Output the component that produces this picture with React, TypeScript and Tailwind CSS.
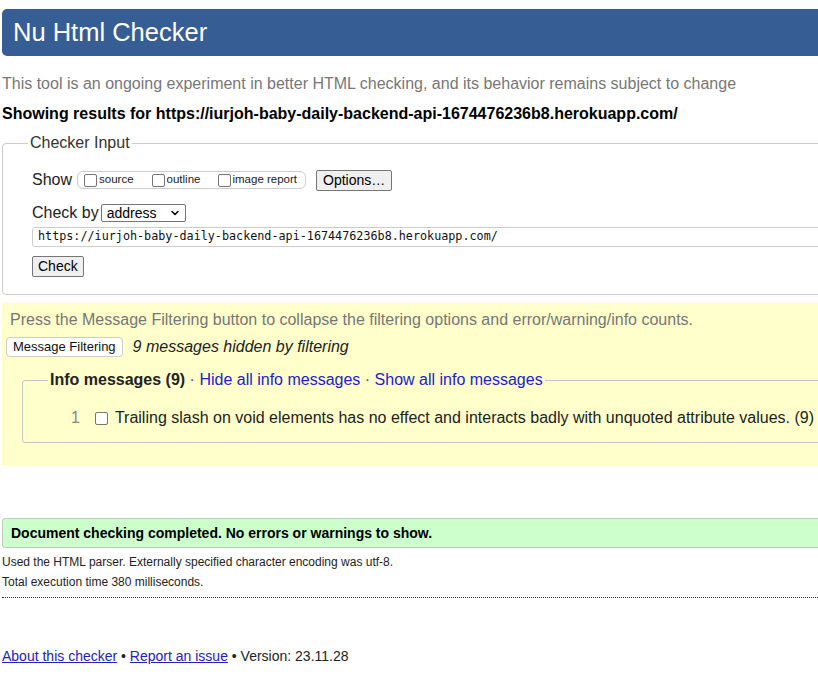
import { ChevronDown } from 'lucide-react';

function Box() {
  return <span className="inline-block w-[13px] h-[13px] border border-[#767676] rounded-[2px] bg-white shrink-0" />;
}

function Btn({ children, className = '' }: { children: React.ReactNode; className?: string }) {
  return (
    <span className={`inline-flex items-center border border-[#767676] rounded-[2px] bg-[#efefef] text-black ${className}`}>
      {children}
    </span>
  );
}

export default function App() {
  return (
    <div className="w-[818px] h-[677px] overflow-hidden bg-white font-['Liberation_Sans',Arial,sans-serif] text-black">
      <div className="w-[860px] pl-[2px]">
        {/* header */}
        <div className="mt-[9px] h-[47px] bg-[#375d95] rounded-l-[5px] flex items-center pl-[11px]">
          <h1 className="text-white text-[25.5px] leading-none">Nu Html Checker</h1>
        </div>

        <p className="mt-[19px] text-[16px] leading-[18px] text-[#777]">
          This tool is an ongoing experiment in better HTML checking, and its behavior remains subject to change
        </p>
        <p className="mt-[12px] text-[16px] leading-[18px] font-bold">
          Showing results for https://iurjoh-baby-daily-backend-api-1674476236b8.herokuapp.com/
        </p>

        {/* checker input */}
        <fieldset className="mt-[11px] border border-[#ccc] rounded-[4px] pb-[16px] pt-[16px]">
          <legend className="ml-[25px] px-[2px] text-[16px] leading-[18px] text-[#333]">Checker Input</legend>
          <div className="pl-[29px]">
            <div className="flex items-center h-[22px] mt-[1px]">
              <span className="text-[16px] text-[#222] mr-[5px]">Show</span>
              <span className="flex items-center h-[18px] border border-[#ccc] rounded-[6px] px-[6px] text-[11.5px] text-[#222]">
                <Box />
                <span className="ml-[2px] mr-[18px]">source</span>
                <Box />
                <span className="ml-[2px] mr-[18px]">outline</span>
                <Box />
                <span className="ml-[1px] mr-[2px]">image report</span>
              </span>
              <Btn className="ml-[10px] h-[21px] px-[6px] text-[14px]">Options…</Btn>
            </div>
            <div className="flex items-center h-[20px] mt-[12px]">
              <span className="text-[16px] text-[#222] mr-[2px]">Check by</span>
              <span className="flex items-center justify-between w-[85px] h-[18px] border border-[#767676] rounded-[2px] pl-[5px] pr-[4px] text-[14px]">
                address
                <ChevronDown size={12} strokeWidth={3} />
              </span>
            </div>
            <div className="mt-[4px] h-[20px] border border-[#ccc] rounded-[3px] flex items-center pl-[5px] font-['DejaVu_Sans_Mono',monospace] text-[11.75px] text-[#111]">
              https://iurjoh-baby-daily-backend-api-1674476236b8.herokuapp.com/
            </div>
            <Btn className="mt-[9px] h-[21px] px-[5px] text-[14px]">Check</Btn>
          </div>
        </fieldset>

        {/* filtering */}
        <div className="mt-[8px] h-[163px] bg-[#ffffcc] pt-[8px] pl-[8px]">
          <p className="text-[16px] leading-[18px] text-[#777]">
            Press the Message Filtering button to collapse the filtering options and error/warning/info counts.
          </p>
          <div className="flex items-center mt-[6px] -ml-[4px]">
            <span className="inline-flex items-center h-[20px] px-[6px] border border-[#ccc] rounded-[4px] bg-white text-[13px] text-[#111]">
              Message Filtering
            </span>
            <span className="ml-[10px] italic text-[16px] text-[#222]">9 messages hidden by filtering</span>
          </div>
          <fieldset className="mt-[12px] ml-[12px] border border-[#c4c4c4] rounded-[3px] pt-[20px] pb-[15px]">
            <legend className="ml-[25px] px-[2px] text-[16px] leading-[18px]">
              <b className="text-[#222]">Info messages (9)</b>
              <span className="text-[#555]"> · </span>
              <span className="text-[#2222cc]">Hide all info messages</span>
              <span className="text-[#555]"> · </span>
              <span className="text-[#2222cc]">Show all info messages</span>
            </legend>
            <div className="flex items-center pl-[48px] text-[16px] leading-[18px]">
              <span className="text-[#888]">1</span>
              <span className="ml-[15px] mr-[7px] flex"><Box /></span>
              <span className="text-[#222]">Trailing slash on void elements has no effect and interacts badly with unquoted attribute values. (9)</span>
            </div>
          </fieldset>
        </div>

        {/* result */}
        <div className="mt-[52px] h-[30px] bg-[#ccffcc] border border-[#bcb] rounded-l-[3px] flex items-center pl-[8px] text-[14px] font-bold text-black">
          Document checking completed. No errors or warnings to show.
        </div>
        <p className="mt-[7px] text-[12px] leading-[14px] text-[#222]">
          Used the HTML parser. Externally specified character encoding was utf-8.
        </p>
        <p className="mt-[6px] text-[12px] leading-[14px] text-[#222]">Total execution time 380 milliseconds.</p>
        <div className="mt-[8px] border-t border-dotted border-[#333]" />

        <p className="mt-[50px] text-[14px] leading-[16px] text-[#222]">
          <span className="text-[#2222bb] underline">About this checker</span>
          {' • '}
          <span className="text-[#2222bb] underline">Report an issue</span>
          {' • Version: 23.11.28'}
        </p>
      </div>
    </div>
  );
}
